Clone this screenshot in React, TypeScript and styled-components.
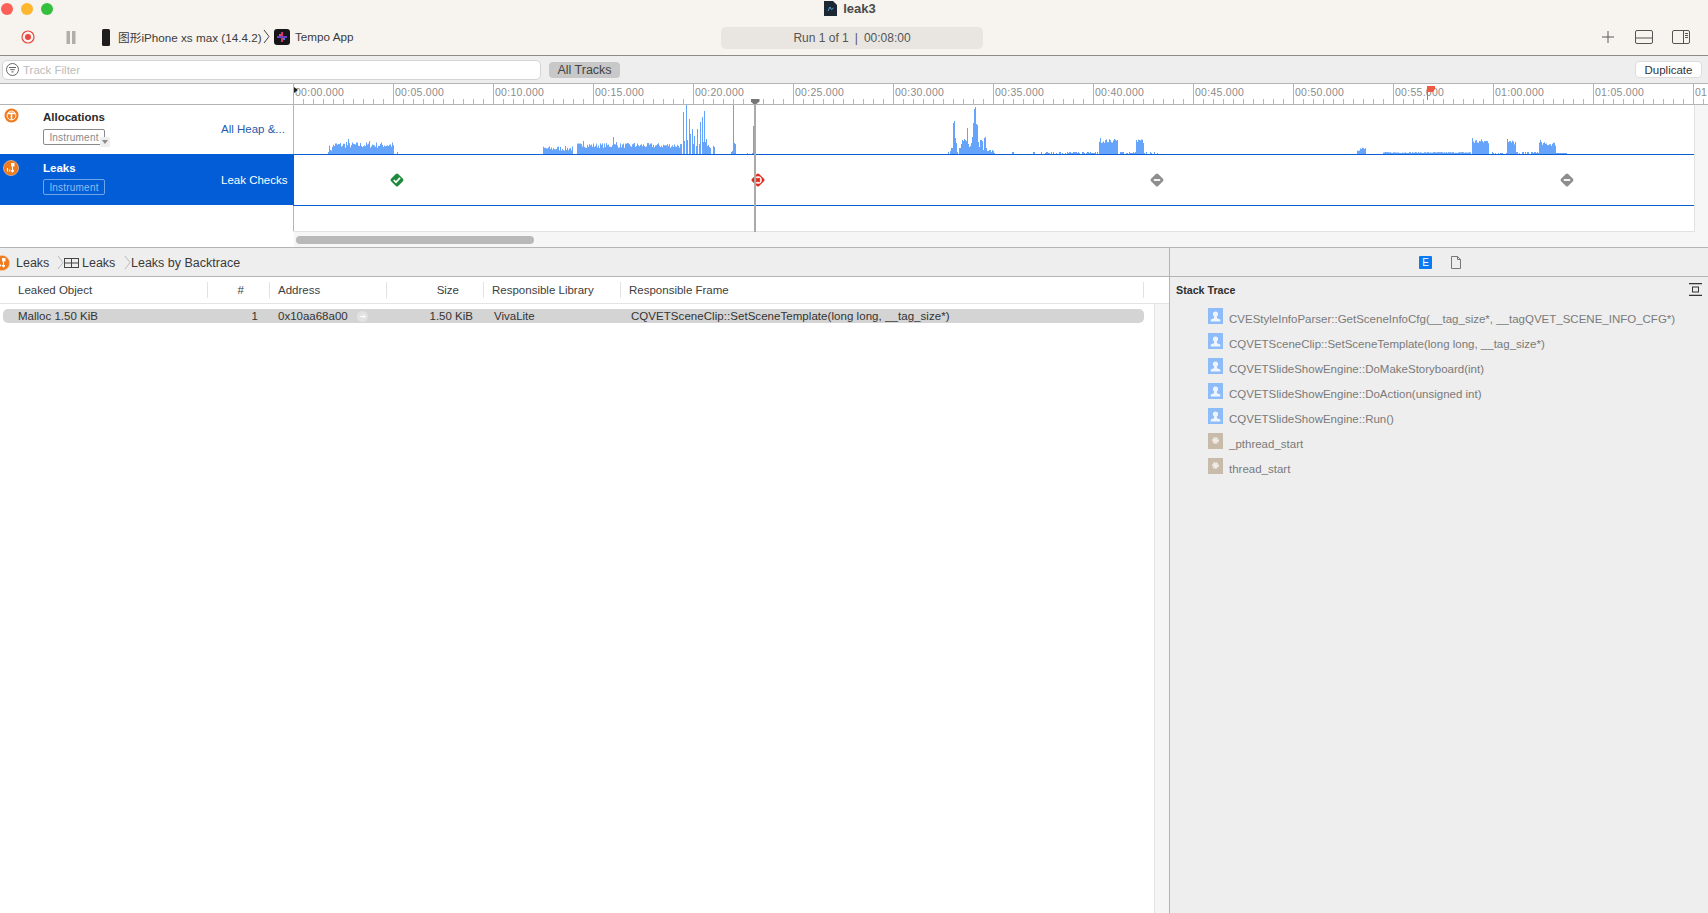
import React from "react";
import styled, { createGlobalStyle } from "styled-components";

const Global = createGlobalStyle`
  html, body { margin: 0; padding: 0; background: #fff; }
  body { font-family: "Liberation Sans", Arial, "Noto Sans CJK SC", sans-serif; color: #333; }
  * { box-sizing: border-box; }
`;

const Page = styled.div`
  width: 1708px; height: 913px; overflow: hidden;
  display: flex; flex-direction: column; background: #fff;
`;

/* ---------- title bar ---------- */
const TitleBar = styled.header`
  height: 56px; flex: none; background: #f7f4ef;
  border-bottom: 1px solid #8e8b87; position: relative;
`;
const TitleRow = styled.div`
  height: 17px; display: flex; align-items: center; justify-content: center;
  gap: 6px; padding-right: 8px;
  font-size: 13px; font-weight: 700; color: #4a4a4a;
`;
const Lights = styled.div`
  position: absolute; left: 1px; top: 3px; display: flex; gap: 8px;
`;
const Light = styled.span<{ $c: string }>`
  width: 12px; height: 12px; border-radius: 50%; background: ${(p) => p.$c};
`;
const Toolbar = styled.div`
  display: grid; grid-template-columns: 721px 262px 1fr; align-items: center;
  height: 22px; margin-top: 10px;
`;
const ToolLeft = styled.div`
  display: flex; align-items: center; padding: 0 0 2px 21px; font-size: 11.7px; color: #3c3c3c;
`;
const Scheme = styled.span<{ $w: number }>`
  width: ${(p) => p.$w}px; white-space: nowrap; flex: none;
`;
const SchemeText = styled.span<{ $w: number }>`
  width: ${(p) => p.$w}px; white-space: nowrap; flex: none; margin-top: -2px;
`;
const RunPill = styled.div`
  height: 22px; border-radius: 5px; background: #e9e6e1; color: #555;
  font-size: 12px; display: flex; align-items: center; justify-content: center; gap: 6px;
`;
const ToolRight = styled.div`
  display: flex; align-items: center; justify-content: flex-end; gap: 19px; padding: 0 18px 2px 0;
`;
const PlusIcon = styled.svg`
  margin-right: 2px;
`;

/* ---------- filter bar ---------- */
const FilterBar = styled.div`
  height: 28px; flex: none; background: #eee; border-bottom: 1px solid #b4b4b4;
  display: flex; align-items: center; padding-left: 2px; padding-right: 6px;
`;
const FilterInput = styled.div`
  width: 539px; height: 20px; background: #fff; border: 1px solid #d4d4d4; border-radius: 5px;
  display: flex; align-items: center; gap: 4px; padding-left: 3px;
  font-size: 11.5px; color: #bcbcbc;
`;
const AllTracks = styled.div`
  margin-left: 8px; width: 71px; height: 16px; background: #c8c8c8; border-radius: 4px;
  font-size: 12.5px; color: #444; display: flex; align-items: center; justify-content: center;
`;
const Duplicate = styled.div`
  margin-left: auto; width: 67px; height: 17px; background: #fff; border-radius: 4px;
  border: 1px solid #ddd; font-size: 11.5px; color: #333;
  display: flex; align-items: center; justify-content: center;
`;

/* ---------- instrument area ---------- */
const InstrumentArea = styled.section`
  height: 148px; flex: none; display: grid; grid-template-columns: 294px 1fr;
`;
const TrackList = styled.div`
  display: flex; flex-direction: column; background: #fff;
`;
const RulerSpacer = styled.div`
  height: 21px; border-bottom: 1px solid #b4b4b4;
`;
const TrackRow = styled.div<{ $sel?: boolean }>`
  height: ${(p) => (p.$sel ? 51 : 49)}px;
  background: ${(p) => (p.$sel ? "#025dd6" : "#fff")};
  color: ${(p) => (p.$sel ? "#fff" : "#2a2a2a")};
  display: grid; grid-template-columns: 43px 178px 1fr; position: relative;
  z-index: ${(p) => (p.$sel ? 1 : 0)};
`;
const TrackIcon = styled.div<{ $top: number; $left: number }>`
  padding: ${(p) => p.$top}px 0 0 ${(p) => p.$left}px;
`;
const TrackInfo = styled.div<{ $pt: number; $gap: number }>`
  display: flex; flex-direction: column; gap: ${(p) => p.$gap}px; padding-top: ${(p) => p.$pt}px; align-items: flex-start;
`;
const TrackName = styled.div`
  font-size: 11.5px; font-weight: 700; line-height: 13px;
`;
const InstrumentTag = styled.div<{ $sel?: boolean }>`
  width: 62px; height: 16px; border-radius: 2px; font-size: 10px; letter-spacing: 0.2px;
  border: 1px solid ${(p) => (p.$sel ? "#6ea6ea" : "#8a8a8a")};
  color: ${(p) => (p.$sel ? "#8fbcf2" : "#8a8a8a")};
  display: flex; align-items: center; justify-content: center;
`;
const TagArrow = styled.div`
  position: absolute; left: 100px; top: 32px; width: 10px; height: 10px;
  background: #eee; border-radius: 2px; display: flex; align-items: center; justify-content: center;
`;
const TrackMode = styled.div<{ $sel?: boolean }>`
  font-size: 11.5px; padding-top: ${(p) => (p.$sel ? 20 : 18)}px; white-space: nowrap;
  color: ${(p) => (p.$sel ? "#fff" : "#1f5cae")};
`;

const TimelineCol = styled.div`
  position: relative; display: flex; flex-direction: column; background: #f6f6f6; min-width: 0;
`;
const Ruler = styled.div`
  height: 21px; flex: none; display: flex; overflow: hidden; background: #fff;
  border-bottom: 1px solid #b4b4b4; margin-left: -1px;
`;
const RulerCell = styled.div`
  width: 100px; flex: none; border-left: 1px solid #b4b4b4; padding: 2px 0 0 1px;
  font-size: 10.5px; letter-spacing: 0.28px; color: #8c8c8c; line-height: 12px; white-space: nowrap;
  background-image: repeating-linear-gradient(to right, transparent 0 9px, #b4b4b4 9px 10px);
  background-size: 100% 5px; background-position: 0 100%; background-repeat: no-repeat;
`;
const Lanes = styled.div`
  width: 1402px; margin-left: -1px; flex: 1; display: flex; flex-direction: column; background: #fff;
  border-right: 1px solid #e2e2e2; border-bottom: 1px solid #e2e2e2;
  box-shadow: inset 1px 0 0 #b4b4b4;
  padding-left: 1px;
`;
const Lane = styled.div<{ $h: number }>`
  height: ${(p) => p.$h}px; flex: none; position: relative; border-bottom: 1.5px solid #0a5fd6;
`;
const LeakLane = styled(Lane)`
  margin-left: -1px; padding-left: 1px; background: #fff;
`;
const ChartSvg = styled.svg`
  display: block; position: absolute; left: 0; bottom: 0;
`;
const Marker = styled.div<{ $x: number }>`
  position: absolute; left: ${(p) => p.$x}px; top: 17px; width: 16px; height: 16px;
`;
const Playhead = styled.div`
  position: absolute; left: 460px; top: 20px; bottom: 0; width: 2px; background: #aaa;
`;
const PlayheadCap = styled.div`
  position: absolute; left: 456.5px; top: 15px; width: 9px; height: 5px; background: #777;
  clip-path: polygon(0 0, 100% 0, 100% 50%, 65% 100%, 35% 100%, 0 50%);
`;
const FlagMark = styled.div`
  position: absolute; left: 1133px; top: 2px;
`;
const StartCaret = styled.div`
  position: absolute; left: 0; top: 3px; width: 0; height: 0;
  border-left: 4px solid #222; border-top: 3px solid transparent; border-bottom: 3px solid transparent;
`;

/* ---------- scroller ---------- */
const ScrollStrip = styled.div`
  height: 15px; flex: none; padding-left: 296px; padding-top: 4px;
  background: linear-gradient(to right, #fff 294px, #f6f6f6 294px);
`;
const ScrollThumb = styled.div`
  width: 238px; height: 8px; border-radius: 4px; background: #b9b9b9;
`;

/* ---------- detail ---------- */
const Detail = styled.section`
  flex: 1; min-height: 0; display: grid; grid-template-columns: 1169px 1fr; border-top: 1px solid #b4b4b4;
`;
const MainPane = styled.div`
  display: flex; flex-direction: column; background: #f5f5f5; min-height: 0;
`;
const Breadcrumb = styled.div`
  height: 29px; flex: none; background: #eee; border-bottom: 1px solid #b4b4b4; padding-top: 1px;
  display: flex; align-items: center; font-size: 12.5px; color: #3a3a3a;
`;
const CrumbText = styled.span<{ $w: number }>`
  width: ${(p) => p.$w}px; flex: none; white-space: nowrap;
`;
const CrumbIcon = styled.span`
  width: 10px; height: 16px; flex: none; overflow: hidden; display: block;
  & > svg { display: block; margin-left: -6px; }
`;
const CrumbTableIcon = styled.svg`
  flex: none;
`;
const TableHeader = styled.div`
  height: 27px; flex: none; background: #fff; border-bottom: 1px solid #e4e4e4;
  display: grid; grid-template-columns: 208px 62px 117px 97px 137px 523px 1fr;
  font-size: 11.5px; color: #3d3d3d; align-items: center;
`;
const HeadCell = styled.div<{ $right?: boolean; $pl?: number; $pr?: number; $sep?: boolean }>`
  height: 16px; display: flex; align-items: center;
  justify-content: ${(p) => (p.$right ? "flex-end" : "flex-start")};
  padding-left: ${(p) => p.$pl ?? 0}px; padding-right: ${(p) => p.$pr ?? 0}px;
  border-right: ${(p) => (p.$sep === false ? "none" : "1px solid #e2e2e2")};
  white-space: nowrap;
`;
const TableBody = styled.div`
  flex: 1; width: 1155px; background: #fff; border-right: 1px solid #e4e4e4; padding: 5px 0 0 3px;
`;
const DataRow = styled.div`
  width: 1141px; height: 14px; background: #d4d4d4; border-radius: 5px;
  display: grid; grid-template-columns: 205px 51px 136px 78px 158px 1fr;
  font-size: 11.5px; color: #333; align-items: center; white-space: nowrap;
`;
const DataCell = styled.div<{ $right?: boolean; $pl?: number; $pr?: number }>`
  padding-left: ${(p) => p.$pl ?? 0}px; padding-right: ${(p) => p.$pr ?? 0}px;
  text-align: ${(p) => (p.$right ? "right" : "left")};
`;
const FrameCell = styled.div`
  letter-spacing: 0.05px;
`;
const AddressCell = styled.div`
  display: flex; align-items: center; gap: 9px; padding-left: 19px;
`;
const GoDot = styled.span`
  width: 11px; height: 11px; border-radius: 50%; background: #e2e2e2;
  display: inline-flex; align-items: center; justify-content: center;
`;

const Inspector = styled.aside`
  background: #eee; border-left: 1px solid #b4b4b4; display: flex; flex-direction: column; min-height: 0;
`;
const InspectorTabs = styled.div`
  height: 29px; flex: none; border-bottom: 1px solid #b4b4b4;
  display: flex; align-items: center; justify-content: flex-start; padding-left: 249px; gap: 19px;
`;
const TabE = styled.div`
  width: 13px; height: 13px; background: #0a7bf2; border-radius: 1px; color: #fff;
  font-size: 10px; display: flex; align-items: center; justify-content: center;
`;
const StackHeader = styled.div`
  height: 25px; flex: none; display: flex; align-items: center; justify-content: space-between;
  padding: 0 6px; font-size: 10.7px; font-weight: 700; color: #2e2e2e;
`;
const StackList = styled.div`
  display: flex; flex-direction: column; padding-left: 38px; padding-top: 6px;
`;
const StackRow = styled.div`
  height: 25px; display: flex; align-items: flex-start; gap: 6px; font-size: 11.5px; color: #7a7a7a; white-space: nowrap;
`;
const StackText = styled.span`
  padding-top: 5px;
`;

/* ---------- drawings ---------- */
const Bars: [number, number][] = (() => {
  const out: [number, number][] = [];
  let seed = 7;
  const rnd = () => {
    seed = (seed * 16807) % 2147483647;
    return seed / 2147483647;
  };
  const span = (a: number, b: number, lo: number, hi: number) => {
    for (let x = a; x <= b; x++) out.push([x, lo + rnd() * (hi - lo)]);
  };
  const sparse = (a: number, b: number) => {
    for (let x = a; x <= b; x++) if (rnd() > 0.35) out.push([x, 1 + Math.round(rnd())]);
  };
  const pts = (list: number[][]) => list.forEach(([x, h]) => out.push([x, h]));
  span(328, 332, 2, 9); span(333, 393, 6, 12);
  pts([[348, 15], [346, 12], [369, 13], [397, 2]]);
  span(543, 572, 3, 8); span(577, 681, 6, 11);
  pts([[577, 10], [583, 13], [613, 17], [616, 12], [634, 11]]);
  pts([[683, 42], [684, 13], [686, 49], [687, 14], [689, 35], [690, 20], [692, 25], [693, 10], [694, 18], [696, 8], [697, 25], [699, 10], [700, 32], [702, 37], [703, 12], [704, 43], [705, 12], [706, 15], [707, 8], [708, 9], [709, 7], [710, 6], [713, 8], [714, 7]]);
  pts([[731, 2], [732, 3], [733, 49], [734, 11], [735, 10], [747, 1], [752, 1], [753, 28], [754, 36], [755, 3]]);
  pts([[948, 2], [950, 3], [951, 6], [952, 6], [953, 31], [954, 33], [955, 16], [956, 11], [957, 2], [959, 6], [960, 6], [961, 10], [962, 14], [963, 13], [964, 15], [965, 14], [966, 13], [967, 26], [968, 10], [969, 7], [970, 8], [971, 11], [972, 17], [973, 31], [974, 45], [975, 47], [976, 30], [977, 29], [978, 12], [979, 7], [980, 14], [981, 14], [982, 13], [983, 4], [984, 16], [985, 17], [986, 6], [987, 3], [988, 3], [989, 4], [990, 4], [991, 2], [992, 4], [993, 3], [994, 1]]);
  sparse(1012, 1013); sparse(1032, 1098);
  span(1099, 1117, 11, 15); pts([[1100, 16], [1114, 15]]);
  sparse(1118, 1135); span(1136, 1143, 10, 15); sparse(1144, 1157);
  span(1357, 1365, 3, 7); span(1383, 1470, 1, 2);
  span(1472, 1488, 10, 15); pts([[1472, 16]]); sparse(1489, 1506);
  span(1507, 1515, 9, 14); pts([[1507, 15]]); sparse(1516, 1538);
  span(1539, 1555, 8, 12); pts([[1540, 14]]); span(1556, 1566, 1, 1);
  return out;
})();

const AllocChart = () => (
  <ChartSvg width="1400" height="49" viewBox="0 0 1400 49">
    {Bars.map(([x, h], i) => (
      <rect key={i} x={x - 294} y={49 - h} width={1} height={h} fill="#66a3fb" />
    ))}
  </ChartSvg>
);

const Diamond = ({ fill, children }: { fill: string; children: React.ReactNode }) => (
  <svg width="16" height="16" viewBox="0 0 16 16">
    <rect x="3" y="3" width="10" height="10" rx="1.6" fill={fill} transform="rotate(45 8 8)" />
    {children}
  </svg>
);

const AllocIcon = () => (
  <svg width="15" height="15" viewBox="0 0 15 15">
    <circle cx="7.5" cy="7.5" r="7" fill="#f07a1c" />
    <circle cx="7.5" cy="7.5" r="4.4" fill="none" stroke="#fff" strokeWidth="1" />
    <path d="M4 5.4h7M7.5 5.4v6" stroke="#fff" strokeWidth="1.6" />
  </svg>
);

const LeakIcon = ({ size = 16 }: { size?: number }) => (
  <svg width={size} height={size} viewBox="0 0 16 16">
    <circle cx="8" cy="8" r="7.6" fill="#f07a1c" stroke="#f6c9a0" strokeWidth="0.6" />
    <rect x="8" y="3" width="3.5" height="3.5" fill="#fff" />
    <path d="M9.5 6.5v6M4.5 8v3.5M6.7 9.5v2" stroke="#fff" strokeWidth="1.1" />
    <rect x="8" y="10" width="3" height="1.6" fill="#fff" />
  </svg>
);

const UserIcon = () => (
  <svg width="15" height="16" viewBox="0 0 15 16">
    <rect width="15" height="16" fill="#8dbcf8" />
    <circle cx="7.5" cy="6" r="2.6" fill="#eef5ff" />
    <path d="M6.3 8h2.4l.4 2.2 3.2 1.4V13.5H2.7v-1.9l3.2-1.4z" fill="#eef5ff" />
  </svg>
);

const GearIcon = () => (
  <svg width="15" height="16" viewBox="0 0 15 16">
    <rect width="15" height="16" fill="#c9bbaa" />
    <circle cx="7.5" cy="7.5" r="2.4" fill="none" stroke="#f1ece5" strokeWidth="2" strokeDasharray="1.6 .5" />
    <circle cx="7.5" cy="7.5" r="2" fill="#f1ece5" />
  </svg>
);

const labels = [
  "00:00.000", "00:05.000", "00:10.000", "00:15.000", "00:20.000", "00:25.000", "00:30.000", "00:35.000",
  "00:40.000", "00:45.000", "00:50.000", "00:55.000", "01:00.000", "01:05.000", "01:10.000",
];

const frames: [string, boolean][] = [
  ["CVEStyleInfoParser::GetSceneInfoCfg(__tag_size*, __tagQVET_SCENE_INFO_CFG*)", true],
  ["CQVETSceneClip::SetSceneTemplate(long long, __tag_size*)", true],
  ["CQVETSlideShowEngine::DoMakeStoryboard(int)", true],
  ["CQVETSlideShowEngine::DoAction(unsigned int)", true],
  ["CQVETSlideShowEngine::Run()", true],
  ["_pthread_start", false],
  ["thread_start", false],
];

const Chevron = ({ color = "#777" }: { color?: string }) => (
  <svg width="7" height="15" viewBox="0 0 7 15" style={{ flex: "none" }}>
    <path d="M1 1l5 6.5L1 14" fill="none" stroke={color} strokeWidth="1" />
  </svg>
);

export default function App() {
  return (
    <Page>
      <Global />
      <TitleBar>
        <Lights>
          <Light $c="#fc5f57" />
          <Light $c="#fdb62e" />
          <Light $c="#34c03f" />
        </Lights>
        <TitleRow>
          <svg width="13" height="15" viewBox="0 0 13 15">
            <path d="M0 0h9l4 4v11H0z" fill="#1c2733" />
            <path d="M4 10l2-4 1.5 2.5L9.5 7" fill="none" stroke="#4aa3d8" strokeWidth="1" />
          </svg>
          <span>leak3</span>
        </TitleRow>
        <Toolbar>
          <ToolLeft>
            <Scheme $w={38}>
              <svg width="14" height="14" viewBox="0 0 14 14" style={{ display: "block" }}>
                <circle cx="7" cy="7" r="6" fill="none" stroke="#e8483f" strokeWidth="1.2" />
                <circle cx="7" cy="7" r="3" fill="#e8483f" />
              </svg>
            </Scheme>
            <Scheme $w={43}>
              <svg width="10" height="13" viewBox="0 0 10 13" style={{ display: "block", marginLeft: 7 }}>
                <rect x="0.5" width="3.5" height="13" fill="#b0aeaa" />
                <rect x="6" width="3.5" height="13" fill="#b0aeaa" />
              </svg>
            </Scheme>
            <Scheme $w={16}>
              <svg width="8" height="17" viewBox="0 0 8 17" style={{ display: "block" }}>
                <rect width="8" height="17" rx="1.5" fill="#1d1d1d" />
              </svg>
            </Scheme>
            <SchemeText $w={145}>图形iPhone xs max (14.4.2)</SchemeText>
            <Scheme $w={11}><Chevron color="#444" /></Scheme>
            <Scheme $w={21}>
              <svg width="16" height="16" viewBox="0 0 16 16" style={{ display: "block" }}>
                <rect width="16" height="16" rx="3" fill="#16161a" />
                <rect x="7" y="3" width="2" height="10" fill="#d6336c" />
                <rect x="3" y="7" width="10" height="2" fill="#6f42c1" />
                <rect x="5" y="5" width="2" height="2" fill="#e64980" />
                <rect x="9" y="9" width="2" height="2" fill="#228be6" />
              </svg>
            </Scheme>
            <SchemeText $w={60}>Tempo App</SchemeText>
          </ToolLeft>
          <RunPill>
            <span>Run 1 of 1</span>
            <span>|</span>
            <span>00:08:00</span>
          </RunPill>
          <ToolRight>
            <PlusIcon width="12" height="12" viewBox="0 0 12 12">
              <path d="M6 0v12M0 6h12" stroke="#5b5b5b" strokeWidth="1" />
            </PlusIcon>
            <svg width="18" height="14" viewBox="0 0 18 14">
              <rect x=".5" y=".5" width="17" height="13" rx="1.5" fill="none" stroke="#555" />
              <path d="M1 8h16" stroke="#555" />
            </svg>
            <svg width="18" height="14" viewBox="0 0 18 14">
              <rect x=".5" y=".5" width="17" height="13" rx="1.5" fill="none" stroke="#555" />
              <path d="M11.5 1v12M13 3.5h3M13 5.5h3M13 7.5h3" stroke="#555" />
            </svg>
          </ToolRight>
        </Toolbar>
      </TitleBar>

      <FilterBar>
        <FilterInput>
          <svg width="13" height="13" viewBox="0 0 13 13">
            <circle cx="6.5" cy="6.5" r="6" fill="none" stroke="#666" />
            <path d="M3 4.5h7M4.2 6.7h4.6M5.4 8.9h2.2" stroke="#666" />
          </svg>
          <span>Track Filter</span>
        </FilterInput>
        <AllTracks>All Tracks</AllTracks>
        <Duplicate>Duplicate</Duplicate>
      </FilterBar>

      <InstrumentArea>
        <TrackList>
          <RulerSpacer />
          <TrackRow>
            <TrackIcon $top={3} $left={4}><AllocIcon /></TrackIcon>
            <TrackInfo $pt={6} $gap={5}>
              <TrackName>Allocations</TrackName>
              <InstrumentTag>Instrument</InstrumentTag>
            </TrackInfo>
            <TrackMode>All Heap &amp;...</TrackMode>
            <TagArrow>
              <svg width="6" height="4" viewBox="0 0 6 4"><path d="M0 0h6L3 4z" fill="#8a8a8a" /></svg>
            </TagArrow>
          </TrackRow>
          <TrackRow $sel>
            <TrackIcon $top={6} $left={3}><LeakIcon /></TrackIcon>
            <TrackInfo $pt={8} $gap={4}>
              <TrackName>Leaks</TrackName>
              <InstrumentTag $sel>Instrument</InstrumentTag>
            </TrackInfo>
            <TrackMode $sel>Leak Checks</TrackMode>
          </TrackRow>
        </TrackList>
        <TimelineCol>
          <Ruler>
            {labels.map((l) => <RulerCell key={l}>{l}</RulerCell>)}
          </Ruler>
          <Lanes>
            <Lane $h={50}><AllocChart /></Lane>
            <LeakLane $h={51}>
              <Marker $x={96}>
                <Diamond fill="#1f8a3c"><path d="M4.8 8l2.2 2.3 4-4.4" fill="none" stroke="#fff" strokeWidth="1.8" /></Diamond>
              </Marker>
              <Marker $x={457}>
                <Diamond fill="#df2c1e">
                  <circle cx="8" cy="8" r="3.8" fill="#fff" />
                  <path d="M6.2 6.2l3.6 3.6M9.8 6.2l-3.6 3.6" stroke="#df2c1e" strokeWidth="2" />
                </Diamond>
              </Marker>
              <Marker $x={856}>
                <Diamond fill="#8e8e8e"><path d="M4.8 8h6.4" stroke="#fff" strokeWidth="1.8" /></Diamond>
              </Marker>
              <Marker $x={1266}>
                <Diamond fill="#8e8e8e"><path d="M4.8 8h6.4" stroke="#fff" strokeWidth="1.8" /></Diamond>
              </Marker>
            </LeakLane>
          </Lanes>
          <Playhead />
          <PlayheadCap />
          <StartCaret />
          <FlagMark>
            <svg width="9" height="14" viewBox="0 0 9 14">
              <path d="M0.5 0v14" stroke="#ef5a45" />
              <path d="M0 0h8v3l-2 3H0z" fill="#ef5a45" />
            </svg>
          </FlagMark>
        </TimelineCol>
      </InstrumentArea>

      <ScrollStrip><ScrollThumb /></ScrollStrip>

      <Detail>
        <MainPane>
          <Breadcrumb>
            <CrumbIcon><LeakIcon /></CrumbIcon>
            <CrumbText $w={6} />
            <CrumbText $w={41}>Leaks</CrumbText>
            <Chevron color="#bbb" />
            <CrumbTableIcon width="15" height="10" viewBox="0 0 15 10">
              <rect x=".5" y=".5" width="14" height="9" fill="none" stroke="#444" />
              <path d="M7.5 0v10M0 5h15" stroke="#444" />
            </CrumbTableIcon>
            <CrumbText $w={3} />
            <CrumbText $w={42}>Leaks</CrumbText>
            <Chevron color="#bbb" />
            <CrumbText $w={130}>Leaks by Backtrace</CrumbText>
          </Breadcrumb>
          <TableHeader>
            <HeadCell $pl={18}>Leaked Object</HeadCell>
            <HeadCell $right $pr={25}>#</HeadCell>
            <HeadCell $pl={8}>Address</HeadCell>
            <HeadCell $right $pr={24}>Size</HeadCell>
            <HeadCell $pl={8}>Responsible Library</HeadCell>
            <HeadCell $pl={8}>Responsible Frame</HeadCell>
            <HeadCell $sep={false} />
          </TableHeader>
          <TableBody>
            <DataRow>
              <DataCell $pl={15}>Malloc 1.50 KiB</DataCell>
              <DataCell $right $pr={1}>1</DataCell>
              <AddressCell>
                <span>0x10aa68a00</span>
                <GoDot>
                  <svg width="7" height="7" viewBox="0 0 7 7">
                    <path d="M1 3.5h5M4 1.5l2 2-2 2" fill="none" stroke="#fff" />
                  </svg>
                </GoDot>
              </AddressCell>
              <DataCell $right>1.50 KiB</DataCell>
              <DataCell $pl={21}>VivaLite</DataCell>
              <FrameCell>CQVETSceneClip::SetSceneTemplate(long long, __tag_size*)</FrameCell>
            </DataRow>
          </TableBody>
        </MainPane>
        <Inspector>
          <InspectorTabs>
            <TabE>E</TabE>
            <svg width="10" height="13" viewBox="0 0 10 13">
              <path d="M.5.5h6l3 3v9h-9zM6.5.5v3h3" fill="none" stroke="#777" />
            </svg>
          </InspectorTabs>
          <StackHeader>
            <span>Stack Trace</span>
            <svg width="13" height="13" viewBox="0 0 13 13">
              <path d="M0 .7h13M0 12.3h13" stroke="#333" strokeWidth="1.2" />
              <rect x="3.5" y="4" width="6" height="5" fill="none" stroke="#333" />
            </svg>
          </StackHeader>
          <StackList>
            {frames.map(([t, user]) => (
              <StackRow key={t}>
                {user ? <UserIcon /> : <GearIcon />}
                <StackText>{t}</StackText>
              </StackRow>
            ))}
          </StackList>
        </Inspector>
      </Detail>
    </Page>
  );
}
